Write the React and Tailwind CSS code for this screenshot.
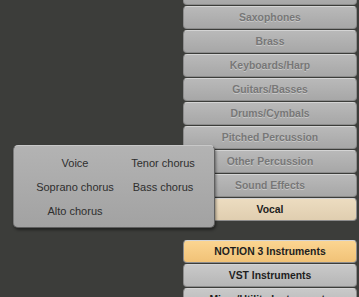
const categories = [
  { label: 'Woodwinds', kind: 'off' },
  { label: 'Saxophones', kind: 'off' },
  { label: 'Brass', kind: 'off' },
  { label: 'Keyboards/Harp', kind: 'off' },
  { label: 'Guitars/Basses', kind: 'off' },
  { label: 'Drums/Cymbals', kind: 'off' },
  { label: 'Pitched Percussion', kind: 'off' },
  { label: 'Other Percussion', kind: 'off' },
  { label: 'Sound Effects', kind: 'off' },
  { label: 'Vocal', kind: 'picked' },
]

const libraries = [
  { label: 'NOTION 3 Instruments', kind: 'active' },
  { label: 'VST Instruments', kind: 'on' },
  { label: 'Mixer/Utility Instruments', kind: 'on' },
]

const voices = ['Voice', 'Tenor chorus', 'Soprano chorus', 'Bass chorus', 'Alto chorus']

function PanelButton({ label, kind }) {
  let look = 'bg-gradient-to-b from-[#b9b9b9] to-[#a7a7a7] text-[#777777] [text-shadow:0_1px_0_rgba(255,255,255,0.35)]'
  if (kind === 'picked') look = 'bg-gradient-to-b from-[#ecdcc0] to-[#e0ceb0] text-[#1e1e1e]'
  if (kind === 'active') look = 'bg-gradient-to-b from-[#fbd591] to-[#f1c277] text-[#1e1e1e]'
  if (kind === 'on') look = 'bg-gradient-to-b from-[#c9c9c9] to-[#b6b6b6] text-[#1e1e1e]'

  return (
    <div
      className={`h-[23px] shrink-0 rounded-[4px] border border-[#8c8c8c] border-t-[#d4d4d4] flex items-center justify-center text-[10.4px] font-bold ${look}`}
    >
      {label}
    </div>
  )
}

export default function App() {
  return (
    <div
      className="relative w-[359px] h-[297px] overflow-hidden bg-[#3c3d3a]"
      style={{ fontFamily: '"Liberation Sans", Arial, sans-serif' }}
    >
      <div className="ml-[183px] w-[174px] -mt-[18px] flex flex-col gap-[1px]">
        {categories.map((c) => (
          <PanelButton key={c.label} {...c} />
        ))}
        <div className="h-[17px] shrink-0" />
        {libraries.map((c) => (
          <PanelButton key={c.label} {...c} />
        ))}
      </div>

      {/* voice type popup */}
      <div className="absolute left-[13px] top-[145px] w-[202px] h-[83px] rounded-[5px] border border-[#5f5f5f] border-t-[#c8c8c8] border-l-[#7a7a7a] bg-gradient-to-b from-[#b3b3b3] to-[#a2a2a2] shadow-[1px_2px_3px_rgba(0,0,0,0.45)]">
        <div className="pl-[17px] pt-[5px] grid grid-cols-[88px_88px] auto-rows-[24px] text-[11px] text-[#2e2e2e]">
          {voices.map((v) => (
            <div key={v} className="flex items-center justify-center whitespace-nowrap">
              {v}
            </div>
          ))}
        </div>
      </div>
    </div>
  )
}
